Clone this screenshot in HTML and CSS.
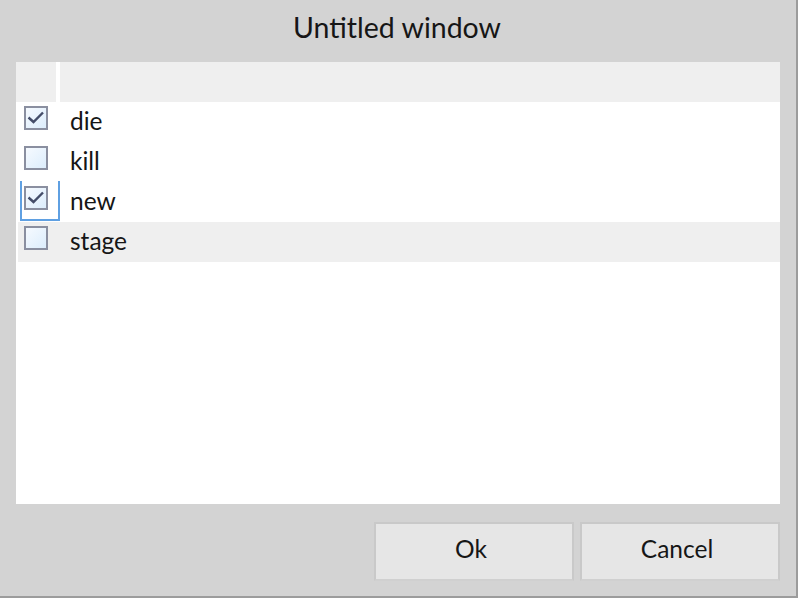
FILE: index.html
```html
<!DOCTYPE html>
<html>
<head>
<meta charset="utf-8">
<link rel="stylesheet" href="styles.css">
</head>
<body>
<div class="window">
  <div class="titlebar">Untitled window</div>
  <div class="table">
    <div class="thead">
      <div class="th th-check"></div>
      <div class="th th-name"></div>
    </div>
    <div class="row">
      <div class="cell-check"><span class="cb"><svg viewBox="0 0 20 20" width="20" height="20"><path d="M2.5 9.5 L7.5 14 L17 4.5" fill="none" stroke="#444d69" stroke-width="2.4"/></svg></span></div>
      <div class="cell-name">die</div>
    </div>
    <div class="row">
      <div class="cell-check"><span class="cb"></span></div>
      <div class="cell-name">kill</div>
    </div>
    <div class="row">
      <div class="cell-check focused"><span class="cb"><svg viewBox="0 0 20 20" width="20" height="20"><path d="M2.5 9.5 L7.5 14 L17 4.5" fill="none" stroke="#444d69" stroke-width="2.4"/></svg></span></div>
      <div class="cell-name">new</div>
    </div>
    <div class="row alt">
      <div class="cell-check"><span class="cb"></span></div>
      <div class="cell-name">stage</div>
    </div>
  </div>
  <div class="actions">
    <button class="btn">Ok</button>
    <button class="btn">Cancel</button>
  </div>
</div>
</body>
</html>
```
FILE: styles.css
```css
html, body {
  margin: 0;
  padding: 0;
  background: #d3d3d3;
}
body {
  font-family: "Lato", "Open Sans", sans-serif;
  color: #161616;
}
.window {
  width: 796px;
  height: 596px;
  background: #d3d3d3;
  border-right: 2px solid #9c9c9c;
  border-bottom: 2px solid #9c9c9c;
  display: flex;
  flex-direction: column;
}
.titlebar {
  height: 62px;
  line-height: 54px;
  text-align: center;
  font-size: 28.5px;
  padding-right: 2px;
}
.table {
  margin: 0 16px;
  height: 442px;
  background: #ffffff;
  display: flex;
  flex-direction: column;
}
.thead {
  display: flex;
  height: 40px;
  gap: 4px;
}
.th {
  background: #efefef;
}
.th-check {
  width: 40px;
}
.th-name {
  flex: 1;
}
.row {
  display: flex;
  height: 40px;
  margin-left: 2px;
}
.row.alt {
  background: #efefef;
}
.cell-check {
  width: 42px;
  position: relative;
  box-sizing: border-box;
  padding-left: 6px;
  padding-top: 4px;
}
.cell-check.focused::after {
  content: "";
  position: absolute;
  left: 2px;
  top: -1px;
  width: 40px;
  height: 40px;
  box-sizing: border-box;
  border: 2px solid #5fa0e2;
  border-top: none;
}
.cb {
  display: block;
  width: 24px;
  height: 24px;
  box-sizing: border-box;
  border: 2px solid #8a8fa0;
  background: linear-gradient(135deg, #f6faff 0%, #dcedfc 100%);
}
.cb svg {
  display: block;
}
.cell-name {
  flex: 1;
  padding-left: 10px;
  font-size: 24.5px;
  line-height: 37px;
}
.actions {
  display: flex;
  justify-content: flex-end;
  gap: 6px;
  margin-top: 18px;
  padding-right: 16px;
}
.btn {
  width: 200px;
  height: 59px;
  box-sizing: border-box;
  background: #e6e6e6;
  border: 2px solid #c9c9c9;
  border-bottom-color: #d0d0d0;
  font-family: "Lato", "Open Sans", sans-serif;
  font-size: 24.5px;
  color: #161616;
  padding: 0 6px 6px 0;
  margin: 0;
}
```
